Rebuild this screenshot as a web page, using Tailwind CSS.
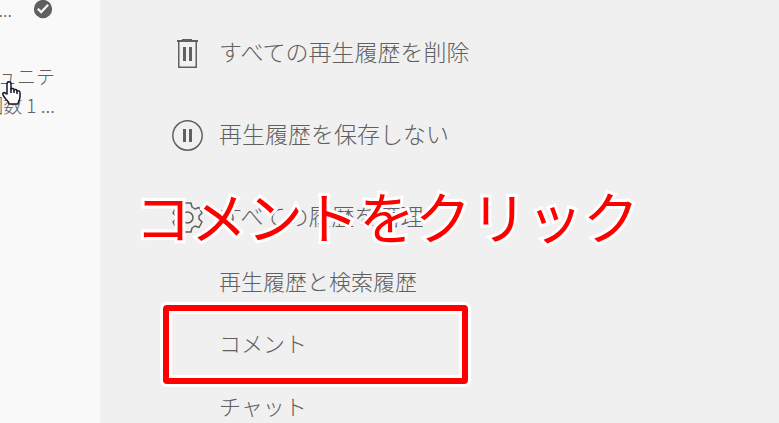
<!DOCTYPE html>
<html lang="ja">
<head>
    <meta charset="UTF-8">
    <meta name="viewport" content="width=device-width, initial-scale=1.0">
    <script src="https://cdn.jsdelivr.net/npm/@tailwindcss/browser@4"></script>
    <title>再生履歴</title>
</head>
<body class="flex h-screen overflow-hidden bg-[#f0f0f0] font-['Noto_Sans_CJK_JP',sans-serif] font-light text-[#606060]">
  <!-- Lista de videos -->
  <aside class="relative w-[100px] shrink-0 bg-[#f9f9f9]">
    <div class="flex h-[18px] items-center gap-[21px]">
      <span class="flex w-3 justify-end text-lg">...</span>
      <svg class="size-[20px]" viewBox="0 0 24 24" fill="currentColor">
        <path d="M12 1a11 11 0 100 22 11 11 0 000-22zM9.8 17.6l-5-5 1.9-1.900 3.100 3.100 7.400-7.800 1.900 1.800z"/>
      </svg>
    </div>
    <div class="mt-[43px] flex w-[55px] flex-col items-end text-[19px] leading-[29px] whitespace-nowrap">
      <p>ュニテ</p>
      <p>回数 1 ...</p>
    </div>
    <!-- Cursor -->
    <svg class="absolute top-[80px] left-0 h-[26px] w-[22px]" viewBox="0 0 22 26" fill="#fff" stroke="#111827" stroke-width="1.5" stroke-linejoin="round">
      <path d="M7 14V4c0-3 4-3 4 0v5c1-1 3-.6 3 1 1-1 3-.5 3 1 1-.7 3-.2 3 2v4c0 3-2 4-2 7H9c0-3-3-4-4-6l-2-3c-1-2 1-3 2-2z"/>
      <path d="M11 8v5M14 10v3M17 11v3" fill="none"/>
    </svg>
  </aside>

  <!-- Menú del historial -->
  <main class="relative flex-1 pt-[31px] whitespace-nowrap">
    <ul class="flex flex-col gap-[38px] pl-[71px] text-[23px]">
      <li>
        <button class="flex h-11 items-center gap-4">
          <svg class="size-8" viewBox="0 0 32 32" fill="currentColor">
            <path d="M6 3h5V2h10v1h6v2h-1v26H7V5H6zM8.500 5v24.500h16V5zM12 10h3v14h-3zM18 10h3v14h-3z" fill-rule="evenodd"/>
          </svg>
          <span class="pb-1">すべての再生履歴を削除</span>
        </button>
      </li>
      <li>
        <button class="flex h-11 items-center gap-4">
          <svg class="size-8" viewBox="0 0 32 32" fill="currentColor">
            <circle cx="16.500" cy="16.500" r="14.700" fill="none" stroke="currentColor" stroke-width="1.500"/>
            <path d="M12 10h3v13h-3zM18 10h3v13h-3z"/>
          </svg>
          <span class="pb-1">再生履歴を保存しない</span>
        </button>
      </li>
      <li>
        <button class="flex h-11 items-center gap-4">
          <svg class="size-8" viewBox="0 0 32 32" fill="none" stroke="currentColor" stroke-width="1.500" stroke-linejoin="round">
            <path d="M13 2h7l1 4 3 2 4-1.500 3 5.500-3 3v3l3 3-3 5.500-4-1.500-3 2-1 4h-7l-1-4-3-2-4 1.500-3-5.500 3-3v-3l-3-3 3-5.500 4 1.500 3-2z"/>
            <circle cx="16.500" cy="16.500" r="5.500"/>
          </svg>
          <span class="pb-1">すべての履歴を管理</span>
        </button>
      </li>
    </ul>

    <ul class="mt-3 pl-[119px] text-[22px]">
      <li class="flex h-[62px] items-center pb-1"><a href="#">再生履歴と検索履歴</a></li>
      <li class="relative flex h-[63px] items-center pb-1">
        <a href="#">コメント</a>
        <span class="absolute -inset-y-2 -left-14 w-[305px] rounded-sm border-6 border-[#f00] ring-3 ring-white">
          <span class="block h-full border-3 border-white"></span>
        </span>
      </li>
      <li class="flex h-[62px] items-center pb-1"><a href="#">チャット</a></li>
    </ul>

    <!-- Anotación -->
    <p class="absolute top-[187px] left-[35px] text-[56px] leading-[56px] font-normal text-[#f00] [-webkit-text-stroke:6px_white] [paint-order:stroke_fill]">コメントをクリック</p>
  </main>
</body>
</html>
